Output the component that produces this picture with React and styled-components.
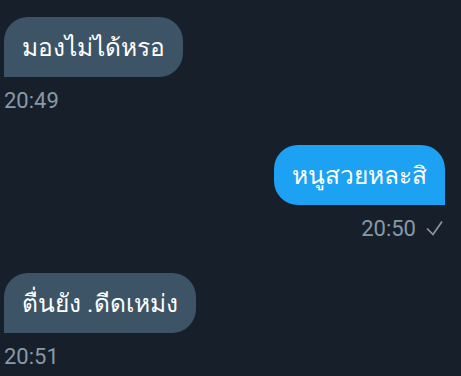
import React from "react";
import styled, { createGlobalStyle } from "styled-components";

const GlobalStyle = createGlobalStyle`
  html, body {
    margin: 0;
    padding: 0;
    background: #17202a;
  }
  body {
    font-family: Roboto, "Noto Sans", "DejaVu Sans", sans-serif;
  }
`;

const messages = [
  { id: 1, text: "มองไม่ได้หรอ", time: "20:49", mine: false },
  { id: 2, text: "หนูสวยหละสิ", time: "20:50", mine: true },
  { id: 3, text: "ตื่นยัง .ดีดเหม่ง", time: "20:51", mine: false },
];

const Chat = styled.div`
  display: flex;
  flex-direction: column;
  gap: 32px;
  padding: 17px 16px 0 4px;
  height: 376px;
  box-sizing: border-box;
  overflow: hidden;
`;

const Message = styled.div`
  display: flex;
  flex-direction: column;
  align-items: ${(p) => (p.$mine ? "flex-end" : "flex-start")};
`;

const Bubble = styled.div`
  display: flex;
  align-items: center;
  height: 60px;
  padding: 0 18px;
  box-sizing: border-box;
  font-size: 24.5px;
  color: #ffffff;
  background: ${(p) => (p.$mine ? "#1da1f2" : "#3d5466")};
  border-radius: ${(p) => (p.$mine ? "24px 24px 0 24px" : "24px 24px 24px 0")};
`;

const Meta = styled.div`
  display: flex;
  align-items: center;
  gap: 10px;
  margin-top: 10px;
  height: 26px;
  font-size: 22px;
  color: #8899a6;
  padding-right: ${(p) => (p.$mine ? "2px" : "0")};
`;

const Check = () => (
  <svg width="17" height="16" viewBox="0 0 17 16" fill="none">
    <path d="M1 8.5l6 6L16 1.5" stroke="#8899a6" strokeWidth="1.7" />
  </svg>
);

export default function App() {
  return (
    <>
      <GlobalStyle />
      <Chat>
        {messages.map((m) => (
          <Message key={m.id} $mine={m.mine}>
            <Bubble $mine={m.mine}>{m.text}</Bubble>
            <Meta $mine={m.mine}>
              {m.time}
              {m.mine && <Check />}
            </Meta>
          </Message>
        ))}
      </Chat>
    </>
  );
}
